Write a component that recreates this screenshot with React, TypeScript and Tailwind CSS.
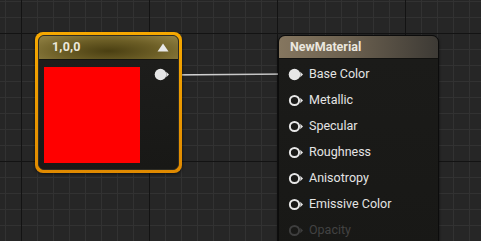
import React from 'react';

const Pin: React.FC<{ filled?: boolean; dim?: boolean }> = ({ filled, dim }) => {
  const c = dim ? '#3e3e3e' : '#e6e6e6';
  return (
    <svg width="16" height="13" viewBox="0 0 16 13" className="flex-shrink-0">
      {filled ? (
        <circle cx="6.5" cy="6.5" r="5.8" fill={c} />
      ) : (
        <circle cx="6.5" cy="6.5" r="4.6" fill="none" stroke={c} strokeWidth="2" />
      )}
      <path d="M12.3 3.8 L15 6.5 L12.3 9.2 Z" fill={c} />
    </svg>
  );
};

const inputs = ['Base Color', 'Metallic', 'Specular', 'Roughness', 'Anisotropy', 'Emissive Color', 'Opacity'];

export default function App() {
  return (
    <div
      className="relative w-[481px] h-[241px] overflow-hidden bg-[#262626] font-['Roboto',sans-serif] [background-image:linear-gradient(to_right,#131313_1px,transparent_1px),linear-gradient(to_bottom,#131313_1px,transparent_1px),linear-gradient(to_right,#323232_1px,transparent_1px),linear-gradient(to_bottom,#323232_1px,transparent_1px)] [background-size:128px_128px,128px_128px,16px_16px,16px_16px] [background-position:21px_33px,21px_33px,5px_1px,5px_1px]"
    >
      {/* wire */}
      <svg className="absolute left-0 top-0" width="481" height="241">
        <defs>
          <linearGradient id="wire" x1="0" x2="1" y1="0" y2="0">
            <stop offset="0" stopColor="#d8d8d8" />
            <stop offset="1" stopColor="#bdbdbd" />
          </linearGradient>
        </defs>
        <line x1="166" y1="75" x2="290" y2="74" stroke="url(#wire)" strokeWidth="1.6" />
      </svg>

      {/* constant node */}
      <div className="absolute left-[35px] top-[32px] w-[147px] h-[141px] rounded-[8px] p-[3px] bg-[linear-gradient(to_bottom,#f6a800,#e08a00)] shadow-[0_1px_3px_rgba(0,0,0,0.6)]">
        <div className="w-full h-full rounded-[6px] bg-[#1c1c1a] flex flex-col overflow-hidden border border-[#2e2c24]">
          <div className="h-[24px] flex items-center justify-between pl-[13px] pr-[9px] bg-[radial-gradient(ellipse_at_50%_65%,#4a3f12_0%,#6c5e26_50%,#948446_100%)] border-b border-[#141410]">
            <span className="text-[12.5px] font-bold text-[#ece8dc] tracking-[0.2px]">1,0,0</span>
            <svg width="12" height="9" viewBox="0 0 12 9">
              <path d="M6 0.5 L11.5 8.5 L0.5 8.5 Z" fill="#e8e8e8" />
            </svg>
          </div>
          <div className="flex-1 flex pl-[5px] pt-[7px] bg-[linear-gradient(to_bottom,#1d1d1b,#181816)]">
            <div className="w-[96px] h-[96px] bg-[#ff0000]" />
            <div className="ml-[14px] mt-[1px]">
              <Pin filled />
            </div>
          </div>
        </div>
      </div>

      {/* material node */}
      <div className="absolute left-[278px] top-[35px] w-[161px] h-[220px] rounded-t-[7px] border border-[#0c0c0c] bg-[#1a1a18] flex flex-col overflow-hidden shadow-[0_1px_3px_rgba(0,0,0,0.6)]">
        <div className="h-[23px] flex items-center pl-[11px] bg-[linear-gradient(to_right,#85765f,#6b604f_45%,#3d3a35)] border-b border-[#11110f]">
          <span className="text-[12.5px] font-bold text-[#ebe7df]">NewMaterial</span>
        </div>
        <div className="flex flex-col pt-[2px] bg-[linear-gradient(to_bottom,#1b1b19,#181816)] flex-1">
          {inputs.map((name, i) => (
            <div key={name} className="h-[26px] flex items-center pl-[9px] gap-[5px]">
              <Pin filled={i === 0} dim={name === 'Opacity'} />
              <span className={`text-[12.5px] ${name === 'Opacity' ? 'text-[#424242]' : 'text-[#e4e4e4]'}`}>{name}</span>
            </div>
          ))}
        </div>
      </div>
    </div>
  );
}
